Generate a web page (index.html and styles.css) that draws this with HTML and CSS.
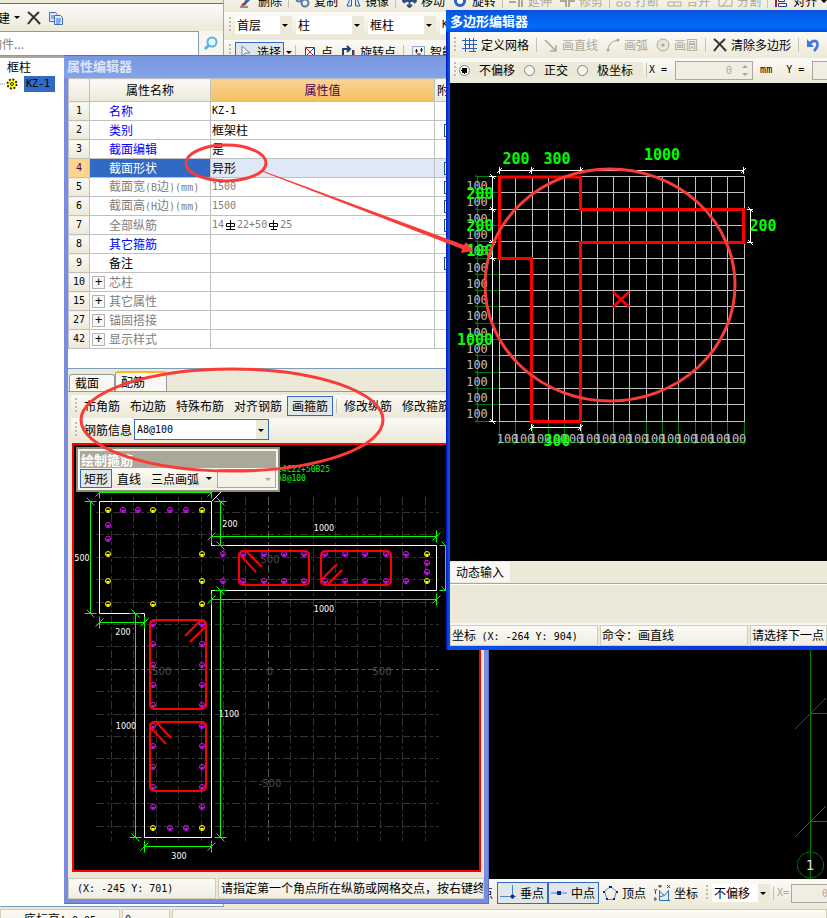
FILE: index.html
```html
<!DOCTYPE html>
<html lang="zh-CN">
<head>
  <meta charset="UTF-8" />
  <meta name="viewport" content="width=device-width, initial-scale=1.0"/>
  <title>属性编辑器</title>
  <link rel="stylesheet" href="styles.css">
</head>
<body>

  <!-- Main window -->
  <div class="app">
    <div class="workspace">

      <!-- Component list -->
      <aside class="dock">
        <div class="dock-title"></div>
        <div class="dock-tools">
          <button class="tool new-btn">新建<i class="arrow"></i></button>
          <button class="tool" aria-label="删除构件"><svg width="14" height="14" viewBox="0 0 14 14"><path d="M1 1Q6 5 13 13M12 1Q6 6 1 13" fill="none" stroke="#333" stroke-width="2"/></svg></button>
          <button class="tool" aria-label="复制构件"><svg width="16" height="14" viewBox="0 0 16 14"><g fill="#dcebff" stroke="#3a6fc4"><path d="M1.500 1.500h6l2 2v7h-8z"/><path d="M6.500 4.500h6l2 2v7h-8z"/></g><path d="M3 5h3M3 7h3M8 8h5M8 10h5M8 12h4" stroke="#3a6fc4"/></svg></button>
        </div>
        <div class="dock-search">
          <input type="text" placeholder="构件..." aria-label="搜索构件">
          <button aria-label="搜索"><svg width="15" height="15" viewBox="0 0 15 15"><circle cx="9" cy="6" r="4.500" fill="#eef8ff" stroke="#5eb0ea" stroke-width="2"/><path d="M6 9l-4 4" stroke="#5eb0ea" stroke-width="3"/></svg></button>
        </div>
        <div class="tree">
          <div class="tree-row">框柱</div>
          <div class="tree-row">
            <svg width="22" height="12" viewBox="0 0 22 12"><path d="M0 6h6" stroke="#888" stroke-dasharray="1 1"/><circle cx="12" cy="6" r="4.500" fill="#ff0" stroke="#222" stroke-width="2" stroke-dasharray="2 1.500"/><circle cx="12" cy="6" r="3.500" fill="#ff0"/><circle cx="12" cy="6" r="1.500" fill="none" stroke="#222"/></svg>
            <span class="picked num">KZ-1</span>
          </div>
        </div>
      </aside>

      <main class="stage">
        <div class="bar bar-cut">
          <button class="tool"><svg width="15" height="14" viewBox="0 0 15 14"><path d="M14 1L6 9" stroke="#2b5fb4" stroke-width="3"/><path d="M2 12q2-5 5-3q1 3-5 3z" fill="#a33"/><path d="M1 13h8" stroke="#334"/></svg>删除</button>
          <i class="sep"></i>
          <button class="tool"><svg width="15" height="14" viewBox="0 0 15 14"><g fill="none" stroke="#5b7ba8" stroke-width="2"><circle cx="4" cy="5" r="2.500"/><circle cx="10" cy="9" r="3.500"/></g></svg>复制</button>
          <button class="tool"><svg width="15" height="14" viewBox="0 0 15 14"><path d="M5.500 1v11h-4.500zM9.500 1v11h4.500z" fill="#d7e6fb" stroke="#2b5fb4"/></svg>镜像</button>
          <i class="sep"></i>
          <button class="tool"><svg width="15" height="14" viewBox="0 0 15 14"><path d="M7.500 1v12M1 7h13M5 11l2.500 2 2.500-2M3 5L1 7l2 2M12 5l2 2-2 2" fill="none" stroke="#2b4f84" stroke-width="2"/></svg>移动</button>
          <button class="tool"><svg width="15" height="14" viewBox="0 0 15 14"><circle cx="7" cy="7" r="4.500" fill="#fff" stroke="#2b62c4" stroke-width="3"/></svg>旋转</button>
          <i class="sep"></i>
          <button class="tool" disabled><svg width="15" height="14" viewBox="0 0 15 14"><path d="M0 8h7M10 2v11M13 2v11" stroke="#aca899" stroke-width="2"/></svg>延伸</button>
          <button class="tool" disabled><svg width="15" height="14" viewBox="0 0 15 14"><path d="M0 7h6M9 7h6M6 1v12M9 4v9" stroke="#aca899" stroke-width="2"/></svg>修剪</button>
          <i class="sep"></i>
          <button class="tool" disabled><svg width="15" height="14" viewBox="0 0 15 14"><path d="M1 8h5v4h-5zM9 8h5v4h-5z" fill="none" stroke="#aca899"/></svg>打断</button>
          <button class="tool" disabled><svg width="15" height="14" viewBox="0 0 15 14"><path d="M1 8h13v4h-13zM7 8v4" fill="none" stroke="#aca899"/></svg>合并</button>
          <button class="tool" disabled><svg width="15" height="14" viewBox="0 0 15 14"><path d="M1 5h13v7h-13zM4 13l7-10" fill="none" stroke="#aca899"/></svg>分割</button>
          <i class="sep"></i>
          <button class="tool"><svg width="15" height="14" viewBox="0 0 15 14"><path d="M2 1v12" stroke="#a22" stroke-width="2"/><path d="M4.500 4.500h6v3h-6zM4.500 9.500h8v3h-8z" fill="#fff" stroke="#1c3c9c"/></svg>对齐<i class="arrow"></i></button>
        </div>
        <div class="bar bar-selects">
          <i class="grip"></i>
          <span class="combo w-floor"><select aria-label="楼层"><option>首层</option></select></span>
          <span class="combo w-kind"><select aria-label="类型"><option>柱</option></select></span>
          <span class="combo w-kind"><select aria-label="构件类型"><option>框柱</option></select></span>
          <span class="combo w-kind"><select aria-label="构件" class="num"><option>KZ-1</option></select></span>
        </div>
        <div class="bar bar-draw">
          <i class="grip"></i>
          <button class="tool pressed"><svg width="15" height="14" viewBox="0 0 15 14"><path d="M4 1v10l3-3h5z" fill="#fff" stroke="#6b86ad"/></svg>选择</button>
          <i class="arrow"></i>
          <i class="sep"></i>
          <button class="tool"><svg width="14" height="14" viewBox="0 0 14 14"><path d="M2.500 2.500h9v9h-9z" fill="#fff" stroke="#1c3c9c"/><path d="M3 3l8 8M11 3l-8 8" stroke="#c22"/></svg>点</button>
          <button class="tool"><svg width="15" height="14" viewBox="0 0 15 14"><path d="M2 10V4h6M6 1l3 3-3 3M12 5v7" fill="none" stroke="#24406c" stroke-width="2"/><path d="M13 5v8" stroke="#c22"/></svg>旋转点</button>
          <i class="sep"></i>
          <button class="tool"><svg width="15" height="14" viewBox="0 0 15 14"><path d="M1.500 1.500h12v11h-12z" fill="none" stroke="#2b5fb4" stroke-dasharray="1 1"/><path d="M4 6h3M9 5h3M6 9h4M5.500 4v4M10.500 3v4" stroke="#222"/></svg>智能布置</button>
        </div>

        <div class="viewport">
          <svg width="34" height="232" viewBox="793 648 34 232">
            <g fill="none" stroke="#008000">
              <path d="M810.500 648v232M795 730l31-31M810 714.500h20M795 838l31-31M810 822.500h20"/>
              <circle cx="810.500" cy="866" r="13" stroke-dasharray="6 1"/>
            </g>
            <text class="axis-no" x="810" y="871">1</text>
          </svg>
        </div>

        <div class="bar bar-snap">
          <button class="tool">交点</button>
          <button class="tool pressed"><svg width="16" height="16" viewBox="0 0 16 16"><path d="M0 11.500h16M12.500 0v14" stroke="#4a86d8"/><circle cx="12.500" cy="11.500" r="2" fill="#0a2a8c"/></svg>垂点</button>
          <button class="tool pressed"><svg width="16" height="16" viewBox="0 0 16 16"><path d="M0 8h16" stroke="#8ab4ea" stroke-width="2"/><path d="M6 6h4v4h-4z" fill="#0a2a8c"/></svg>中点</button>
          <button class="tool"><svg width="15" height="16" viewBox="0 0 15 16"><path d="M7.500 1.500l6 5-2.500 8h-7l-2.500-8z" fill="none" stroke="#4a86d8"/><path d="M6 1h3v2h-3zM0 6h2v2h-2zM13 6h2v2h-2zM3 13h2v2h-2zM10 13h2v2h-2z" fill="#0a2a8c"/></svg>顶点</button>
          <button class="tool"><svg width="16" height="16" viewBox="0 0 16 16"><path d="M5.500 5v10.500h11M5.500 6.500l5 4 4-5v10M5.500 12l5-1.500" fill="none" stroke="#2b6fc4"/><path d="M0 4l1.500 2 1.500-2M1.500 6v3M0 13h2v2h-2zM5 0h2v2h-2zM13 0l3 3M16 0l-3 3" fill="none" stroke="#445"/></svg>坐标</button>
          <i class="grip"></i>
          <span class="combo w-offset"><select aria-label="偏移方式"><option>不偏移</option></select></span>
          <i class="sep"></i>
          <label class="num off" for="snap-x">X=</label>
          <input id="snap-x" class="value num" type="text" value="0" disabled>
        </div>
      </main>
    </div>

    <footer class="status app-status">
      <span class="cell cell-level">底标高：<b class="num">0.05</b></span>
      <span class="cell cell-zero num">0</span>
      <span class="cell cell-rest"></span>
    </footer>
  </div>

  <!-- Property editor -->
  <section class="window props">
    <h1>属性编辑器</h1>
    <div class="window-body">
      <div class="sheet">
        <table>
          <colgroup><col class="c-no"><col class="c-name"><col class="c-value"><col></colgroup>
          <thead>
            <tr><th></th><th>属性名称</th><th class="hot">属性值</th><th class="attach">附加</th></tr>
          </thead>
          <tbody>
            <tr><th>1</th><td class="blue">名称</td><td class="num">KZ-1</td><td></td></tr>
            <tr><th>2</th><td class="blue">类别</td><td>框架柱</td><td><input type="checkbox" aria-label="类别附加"></td></tr>
            <tr><th>3</th><td class="blue">截面编辑</td><td>是</td><td></td></tr>
            <tr class="current"><th>4</th><td>截面形状</td><td>异形</td><td><input type="checkbox" aria-label="截面形状附加"></td></tr>
            <tr class="gray"><th>5</th><td>截面宽<b class="num">(B</b>边<b class="num">)(mm)</b></td><td class="num">1500</td><td><input type="checkbox" aria-label="截面宽附加"></td></tr>
            <tr class="gray"><th>6</th><td>截面高<b class="num">(H</b>边<b class="num">)(mm)</b></td><td class="num">1500</td><td><input type="checkbox" aria-label="截面高附加"></td></tr>
            <tr class="gray"><th>7</th><td>全部纵筋</td><td class="num">14<svg class="bar-sign" width="13" height="10" viewBox="0 0 13 10"><path d="M2.500 3.500h8v3h-8zM6.500 0v9M2 9.500h9" fill="none" stroke="#000"/></svg>22+50<svg class="bar-sign" width="13" height="10" viewBox="0 0 13 10"><path d="M2.500 3.500h8v3h-8zM6.500 0v9M4 9.500h6" fill="none" stroke="#000"/></svg>25</td><td><input type="checkbox" aria-label="全部纵筋附加"></td></tr>
            <tr><th>8</th><td class="blue">其它箍筋</td><td></td><td></td></tr>
            <tr><th>9</th><td>备注</td><td></td><td><input type="checkbox" aria-label="备注附加"></td></tr>
            <tr class="gray group"><th>10</th><td><button>+</button>芯柱</td><td></td><td></td></tr>
            <tr class="gray group"><th>15</th><td><button>+</button>其它属性</td><td></td><td></td></tr>
            <tr class="gray group"><th>27</th><td><button>+</button>锚固搭接</td><td></td><td></td></tr>
            <tr class="gray group"><th>42</th><td><button>+</button>显示样式</td><td></td><td></td></tr>
          </tbody>
        </table>
      </div>

      <div class="tabs">
        <button class="tab">截面</button>
        <button class="tab active">配筋</button>
      </div>

      <div class="bar bar-rebar">
        <i class="grip"></i>
        <button class="tool">布角筋</button>
        <button class="tool">布边筋</button>
        <button class="tool">特殊布筋</button>
        <button class="tool">对齐钢筋</button>
        <button class="tool pressed">画箍筋</button>
        <i class="sep"></i>
        <button class="tool">修改纵筋</button>
        <button class="tool">修改箍筋</button>
      </div>
      <div class="bar bar-info">
        <i class="grip"></i>
        <label for="rebar-info">钢筋信息</label>
        <span class="combo framed w-info"><select id="rebar-info" class="num"><option>A8@100</option></select></span>
      </div>

      <div class="section-view">
        <svg id="section" width="404" height="426" viewBox="74 445 404 426">
          <g id="section-grid" class="grid"></g>
          <g class="scale-text">
            <text x="160" y="675">-500</text>
            <text x="270" y="675">0</text>
            <text x="382" y="675">500</text>
            <text x="270" y="563">500</text>
            <text x="270" y="787">-500</text>
          </g>
          <path class="outline" d="M99.500 501.500h112v44h225v45h-225v247h-67v-224h-45zM212 501l9-9"/>
          <g id="section-dims" class="dims"></g>
          <g class="dim-text">
            <text x="82" y="561">500</text>
            <text x="123" y="635">200</text>
            <text x="126" y="729">1000</text>
            <text x="179" y="859">300</text>
            <text x="230" y="527">200</text>
            <text x="229" y="717">1100</text>
            <text x="324" y="531">1000</text>
            <text x="324" y="612">1000</text>
          </g>
          <g id="rebars"></g>
          <g class="stirrup">
            <rect x="239" y="551" width="70" height="34" rx="4"/>
            <rect x="321" y="551" width="70" height="34" rx="4"/>
            <rect x="150" y="620" width="56" height="89" rx="4"/>
            <rect x="150" y="722" width="56" height="69" rx="4"/>
            <path d="M247 552l15 15M241 556l15 16M322 579l15-15M328 584l14-14M185 636l15-15M190 642l15-15M157 723l14 15M151 728l15 16"/>
          </g>
          <g class="note-text">
            <text x="277" y="472">14C22+50B25</text>
            <text x="277" y="481">A8@100</text>
          </g>
        </svg>
        <div class="toolbox">
          <h2>绘制箍筋</h2>
          <div class="toolbox-row">
            <button class="tool pressed">矩形</button>
            <button class="tool">直线</button>
            <button class="tool">三点画弧<i class="arrow"></i></button>
            <span class="combo framed"><select aria-label="弧参数" disabled><option></option></select></span>
          </div>
        </div>
      </div>

      <footer class="status">
        <span class="cell cell-xy num">(X: -245 Y: 701)</span>
        <span class="cell cell-rest">请指定第一个角点所在纵筋或网格交点，按右键终止</span>
      </footer>
    </div>
  </section>

  <!-- Polygon editor -->
  <section class="window polygon">
    <h1>多边形编辑器</h1>
    <div class="window-body">
      <div class="bar bar-poly">
        <i class="grip"></i>
        <button class="tool"><svg width="15" height="14" viewBox="0 0 15 14"><path d="M3.500 0v14M7.500 0v11M11.500 0v14M0 2.500h15M2 6.500h13M0 10.500h15M14 13.500h-7" fill="none" stroke="#2b5fb4"/></svg>定义网格</button>
        <i class="sep"></i>
        <button class="tool" disabled><svg width="14" height="14" viewBox="0 0 14 14"><path d="M1 2l10 10M12 7v6h-6" fill="none" stroke="#aca899" stroke-width="1.500"/></svg>画直线</button>
        <button class="tool" disabled><svg width="14" height="14" viewBox="0 0 14 14"><path d="M2 12Q2 4 12 2" fill="none" stroke="#aca899"/><circle cx="12" cy="2" r="1.500" fill="#aca899"/><circle cx="2" cy="12" r="1.500" fill="#aca899"/></svg>画弧</button>
        <button class="tool" disabled><svg width="14" height="14" viewBox="0 0 14 14"><circle cx="7" cy="7" r="6" fill="#e6e4da" stroke="#aca899"/><circle cx="7" cy="7" r="1.500" fill="#aca899"/></svg>画圆</button>
        <i class="sep"></i>
        <button class="tool"><svg width="14" height="14" viewBox="0 0 14 14"><path d="M1 1Q6 5 13 13M12 1Q6 6 1 13" fill="none" stroke="#333" stroke-width="2"/></svg>清除多边形</button>
        <i class="sep"></i>
        <button class="tool" aria-label="撤销"><svg width="14" height="14" viewBox="0 0 14 14"><path d="M3 6Q8 1 11 4Q13 8 8 13" fill="none" stroke="#3f78d8" stroke-width="2.500"/><path d="M1 1v8h7z" fill="#3f78d8"/></svg></button>
      </div>
      <div class="bar bar-coord">
        <i class="grip"></i>
        <div class="radios">
          <label><input type="radio" name="mode" checked>不偏移</label>
          <label><input type="radio" name="mode">正交</label>
          <label><input type="radio" name="mode">极坐标</label>
        </div>
        <i class="sep"></i>
        <label class="num" for="poly-x">X =</label>
        <span class="spin"><input id="poly-x" class="value num" type="text" value="0" disabled></span>
        <span class="num unit">mm</span>
        <label class="num" for="poly-y">Y =</label>
        <span class="spin"><input id="poly-y" class="value num" type="text" disabled></span>
      </div>

      <div class="poly-view">
        <svg id="poly" width="377" height="478" viewBox="450 83 377 478">
          <g id="poly-ext" class="ext"></g>
          <g id="poly-grid" class="poly-grid"></g>
          <g id="poly-cells" class="cell-text"></g>
          <path class="poly-dims" d="M499 170.500h245M492.500 176v245M750.500 209v33M531 427.500h49
            M499.500 167v7M531.500 167v7M580.500 167v7M743.500 167v7
            M497 173l5-5M529 173l5-5M578 173l5-5M741 173l5-5
            M489 176.500h7M489 209.500h7M489 242.500h7M489 258.500h7M489 421.500h7
            M490 174l5 5M490 207l5 5M490 240l5 5M490 256l5 5M490 419l5 5
            M747 209.500h6M747 242.500h6M748 207l5 5M748 240l5 5
            M531.500 424v7M580.500 424v7M529 430l5-5M578 430l5-5"/>
          <path class="poly-shape" d="M499.500 177h81v32.500h163v33h-163v179h-49v-163h-32z"/>
          <path class="poly-center" d="M613 292l16 15M629 292l-16 15"/>
          <g class="size-text">
            <text x="516" y="164">200</text>
            <text x="557" y="164">300</text>
            <text x="662" y="160">1000</text>
            <text x="480" y="199">200</text>
            <text x="480" y="231">200</text>
            <text x="480" y="256">100</text>
            <text x="475" y="345">1000</text>
            <text x="763" y="231">200</text>
            <text x="557" y="446">300</text>
          </g>
        </svg>
      </div>

      <div class="input-tabs"><button>动态输入</button></div>
      <div class="input-area"></div>
      <footer class="status">
        <span class="cell cell-coord">坐标&nbsp; <b class="num">(X: -264 Y: 904)</b></span>
        <span class="cell cell-coord">命令：画直线</span>
        <span class="cell cell-rest">请选择下一点</span>
      </footer>
    </div>
  </section>

  <!-- Red pen marks -->
  <svg class="marks" width="827" height="918" viewBox="0 0 827 918">
    <ellipse cx="226" cy="163" rx="40" ry="18"/>
    <ellipse cx="232" cy="420" rx="151" ry="51"/>
    <ellipse cx="610" cy="285" rx="125" ry="116"/>
    <path d="M262 170.500L464 245l2-3 7 9-12 2 1-4L262 171.500z"/>
  </svg>

  <script>
    const NS = 'http://www.w3.org/2000/svg';

    function add(parent, tag, attrs, text) {
      const el = document.createElementNS(NS, tag);
      for (const key in attrs) el.setAttribute(key, attrs[key]);
      if (text) el.textContent = text;
      document.getElementById(parent).appendChild(el);
    }

    // section grid
    for (let i = 0; i < 15; i++) {
      const x = Math.round(111 + i * 22.4) + 0.5;
      const y = Math.round(512 + i * 22.4) + 0.5;
      add('section-grid', 'path', { d: `M${x} 497v344`, class: i === 7 ? 'major' : '' });
      add('section-grid', 'path', { d: `M96 ${y}h343`, class: i === 7 ? 'major' : '' });
    }

    // dimension line with a slash and a short extension at each end
    function dim(x1, y1, x2, y2) {
      let d = `M${x1} ${y1}L${x2} ${y2}`;
      const flat = y1 === y2;
      [[x1, y1], [x2, y2]].forEach(([x, y]) => {
        d += flat ? `M${x} ${y - 6}v12M${x - 4} ${y + 4}l8-8` : `M${x - 6} ${y}h12M${x - 4} ${y - 4}l8 8`;
      });
      add('section-dims', 'path', { d });
    }
    dim(90.5, 501.5, 90.5, 613.5);
    dim(99.5, 492.5, 211.5, 492.5);
    dim(99.5, 622.5, 144.5, 622.5);
    dim(135.5, 613.5, 135.5, 837.5);
    dim(144.5, 846.5, 211.5, 846.5);
    dim(220.5, 501.5, 220.5, 545.5);
    dim(220.5, 590.5, 220.5, 837.5);
    dim(211.5, 536.5, 436.5, 536.5);
    dim(211.5, 599.5, 436.5, 599.5);
    dim(445.5, 545.5, 445.5, 590.5);

    function rebar(x, y, kind) {
      add('rebars', 'circle', { cx: x, cy: y, r: 2.5, class: kind });
      add('rebars', 'path', { d: `M${x - 2} ${y}h4l-2 3z`, class: kind + '-tip' });
    }
    [[108, 510], [153, 510], [202, 510], [108, 554], [202, 554], [108, 581], [202, 581],
     [108, 604], [153, 604], [202, 604], [427, 554], [427, 581], [153, 828], [202, 828]]
      .forEach(([x, y]) => rebar(x, y, 'corner'));
    [[123, 510], [138, 510], [170, 510], [186, 510], [108, 525], [108, 539],
     [427, 563], [427, 572], [170, 828], [186, 828]]
      .forEach(([x, y]) => rebar(x, y, 'side'));
    [223, 243, 264, 284, 304, 325, 345, 365, 386, 406].forEach(x => {
      rebar(x, 554, 'side');
      rebar(x, 581, 'side');
    });
    [624, 644, 665, 685, 705, 726, 746, 767, 787, 807].forEach(y => {
      rebar(153, y, 'side');
      rebar(202, y, 'side');
    });

    // polygon grid, 15 x 15 cells
    for (let i = 0; i <= 15; i++) {
      const x = Math.round(499 + i * 16.3) + 0.5;
      const y = Math.round(176 + i * 16.3) + 0.5;
      add('poly-grid', 'path', { d: `M${x} 176v246M499 ${y}h245` });
      add('poly-ext', 'path', { d: `M${x} 421v23M${x - 2} 445l4-4M475 ${y}h24M475 ${y - 2}l4 4` });
      if (i < 15) {
        add('poly-cells', 'text', { x: x + 8, y: 443 }, '100');
        add('poly-cells', 'text', { x: 477, y: y + 13 }, '100');
      }
    }
    add('poly-ext', 'path', { d: 'M477.5 176v246M499 442.5h245' });
  </script>
</body>
</html>
```
FILE: styles.css
```css
* {
  box-sizing: border-box;
}

body {
  margin: 0;
  height: 100vh;
  overflow: hidden;
  position: relative;
  background: #ece9d8;
  color: #000;
  font-family: "Noto Sans CJK SC", sans-serif;
  font-size: 12px;
  line-height: 16px;
  white-space: nowrap;
}

button,
input,
select {
  margin: 0;
  font: inherit;
  color: inherit;
}

b {
  font-weight: normal;
}

svg {
  display: block;
  flex: none;
}

.num {
  font-family: "DejaVu Sans Mono", "Noto Sans CJK SC", monospace;
  font-size: 10px;
}

/* main window */
.app {
  height: 100vh;
  display: flex;
  flex-direction: column;
}

.workspace {
  flex: 1;
  min-height: 0;
  display: flex;
}

.dock {
  width: 224px;
  display: flex;
  flex-direction: column;
  border-right: 1px solid #aca899;
  border-bottom: 1px solid #7f9db9;
  overflow: hidden;
}

.dock-title {
  height: 4px;
  border-bottom: 1px solid #716f64;
}

.dock-tools {
  height: 27px;
  display: flex;
  align-items: center;
  gap: 5px;
  background: linear-gradient(#fbfaf6, #ece9d8);
}

.dock-tools .tool {
  padding: 0;
}

.dock-tools .new-btn {
  margin-left: -15px;
}

.dock-search {
  height: 25px;
  display: flex;
}

.dock-search input {
  width: 212px;
  padding: 0 0 0 2px;
  margin-left: -13px;
  flex: none;
  border: 1px solid #7f9db9;
  background: #fff;
}

.dock-search input::placeholder {
  color: #808080;
  opacity: 1;
}

.dock-search button {
  flex: 1;
  padding: 0 4px;
  border: 0;
  background: #f6f5ee;
}

.tree {
  flex: 1;
  background: #fff;
  border-top: 2px solid #aca899;
}

.tree-row {
  height: 17px;
  display: flex;
  align-items: center;
}

.tree-row:first-child {
  padding-left: 7px;
}

.picked {
  padding: 0 5px 0 2px;
  margin-left: 2px;
  background: #316ac5;
  color: #000;
}

.stage {
  flex: 1;
  min-width: 0;
  display: flex;
  flex-direction: column;
  overflow: hidden;
}

.bar {
  display: flex;
  align-items: center;
  flex: none;
  background: linear-gradient(#fbfaf6, #ece9d8);
}

.tool {
  display: flex;
  align-items: center;
  gap: 4px;
  flex: none;
  height: 20px;
  padding: 0 3px;
  border: 1px solid transparent;
  background: none;
}

.tool:disabled,
.off {
  color: #aca899;
}

.pressed {
  border-color: #316ac5;
  background: #e1e6e8;
}

.sep {
  flex: none;
  width: 1px;
  height: 14px;
  margin: 0 3px;
  background: #c5c2b2;
}

.grip {
  flex: none;
  width: 2px;
  height: 16px;
  margin: 0 4px;
  background: repeating-linear-gradient(#c1bda9 0 2px, transparent 2px 4px);
}

.arrow {
  flex: none;
  border: 3px solid transparent;
  border-top-color: #000;
  border-bottom-width: 0;
}

.combo {
  flex: none;
  position: relative;
  display: flex;
  height: 18px;
  background: #fff;
}

.combo::after {
  content: "";
  position: absolute;
  right: 4px;
  top: 8px;
  border: 3px solid transparent;
  border-top-color: #000;
  border-bottom-width: 0;
}

.combo select {
  width: 100%;
  padding: 0 0 0 2px;
  border: 0;
  appearance: none;
  background: linear-gradient(90deg, transparent calc(100% - 12px), #ece9d8 0);
}

.combo.framed {
  height: 21px;
  border: 1px solid #316ac5;
}

.combo.framed:has(:disabled) {
  border-color: #aca899;
  background: #f4f2e8;
}

.framed:has(:disabled)::after {
  border-top-color: #aca899;
}

.framed select:disabled {
  background: none;
}

.w-floor { width: 57px; }
.w-kind { width: 68px; }
.w-offset { width: 58px; }
.w-info { width: 135px; }

.bar-cut {
  height: 22px;
  margin-top: -10px;
  padding-left: 11px;
}

.bar-cut .sep {
  margin: 0 2px;
}

.bar-selects {
  height: 25px;
  gap: 4px;
}

.bar-selects .grip {
  margin: 0 0 0 5px;
}

.bar-draw {
  height: 24px;
  margin: 3px 0 1px;
  padding-left: 1px;
}

.bar-draw .pressed {
  padding: 0 2px;
  margin-right: 2px;
}

.viewport {
  flex: 1;
  min-height: 0;
  background: #000;
  display: flex;
  justify-content: flex-end;
  align-items: flex-end;
}

.axis-no {
  fill: #e8d8e8;
  font: 14px "DejaVu Sans Mono", monospace;
  text-anchor: middle;
}

.bar-snap {
  height: 28px;
  padding-left: 241px;
}

.bar-snap .tool {
  height: 22px;
}

.bar-snap .pressed {
  width: 51px;
  padding: 0 2px;
}

.value {
  width: 78px;
  height: 19px;
  margin-left: 4px;
  padding: 0 20px;
  border: 1px solid #aca899;
  background: #f0eee2;
  color: #aca899;
  text-align: right;
}

.bar-snap .value {
  padding-right: 40px;
  margin-left: 2px;
}

.status {
  flex: none;
  display: flex;
  gap: 2px;
  height: 21px;
  overflow: hidden;
}

.cell {
  flex: none;
  padding: 1px 2px;
  border: 1px solid #d0ceb8;
  background: linear-gradient(#fbfaf6, #f0eee2);
}

.cell.num {
  line-height: 17px;
}

.cell-rest {
  flex: 1;
  overflow: hidden;
}

.app-status {
  height: 11px;
  padding-top: 2px;
}

.app-status .cell {
  height: 20px;
}

.cell-level {
  width: 120px;
  padding-left: 23px;
}

.cell-zero { width: 48px; }

/* floating windows */
.window {
  position: absolute;
  display: flex;
  flex-direction: column;
}

.window h1 {
  flex: none;
  margin: 0;
  height: 22px;
  font-size: 13px;
  line-height: 22px;
}

.window-body {
  flex: 1;
  min-height: 0;
  display: flex;
  flex-direction: column;
  overflow: hidden;
  background: #ece9d8;
}

.props {
  left: 64px;
  top: 55px;
  width: 425px;
  height: 849px;
  padding: 0 4px 4px;
  background: #7a8ce0;
  border: 1px solid #5d6fc8;
  border-width: 1px 1px 1px 0;
}

.props h1 {
  margin: 0 -4px;
  padding-left: 3px;
  background: linear-gradient(#7a96df, #82a4ea);
  color: #dce6fa;
  line-height: 20px;
}

.sheet {
  flex: none;
  height: 291px;
  background: #fff;
  border-bottom: 1px solid #7f9db9;
}

table {
  width: 100%;
  table-layout: fixed;
  border-collapse: collapse;
}

.c-no { width: 21px; }
.c-name { width: 121px; }
.c-value { width: 224px; }

th,
td {
  height: 19px;
  padding: 0 0 0 1px;
  border: 1px solid #c0c0c0;
  line-height: 16px;
  text-align: left;
  overflow: hidden;
}

th {
  padding: 0;
  font-weight: normal;
  text-align: center;
  background: linear-gradient(#fbfaf6, #ece9d8);
}

thead th {
  height: 23px;
}

thead .hot {
  background: linear-gradient(#f9d497, #f3c060);
  color: #500050;
}

thead .attach {
  padding-left: 2px;
  text-align: left;
}

tbody th {
  font-family: "DejaVu Sans Mono", monospace;
  font-size: 10px;
}

tbody td:nth-child(2) {
  padding-left: 19px;
}

tbody td:nth-child(4) {
  padding-left: 9px;
}

td input {
  display: block;
  width: 13px;
  height: 13px;
  appearance: none;
  border: 1px solid #1c5180;
  background: #fff;
}

.bar-sign {
  display: inline-block;
  vertical-align: -2px;
}

.blue {
  color: #00f;
}

.gray td {
  color: #808080;
}

.current th {
  background: #ffd48d;
  color: #500050;
}

.current td {
  background: #dfe8f6;
}

.current td:nth-child(2) {
  background: #316ac5;
  color: #fff;
}

tbody .group td:nth-child(2) {
  padding-left: 2px;
}

.group button {
  width: 13px;
  height: 13px;
  margin-right: 4px;
  padding: 0;
  border: 1px solid #b4b4b4;
  background: #f8f8f8;
  color: #000;
  font: 12px/11px "DejaVu Sans Mono", monospace;
  vertical-align: 1px;
}

.tabs {
  flex: none;
  height: 23px;
  display: flex;
  align-items: flex-end;
  padding-left: 1px;
  border-bottom: 1px solid #919b9c;
}

.tab {
  width: 46px;
  height: 17px;
  padding: 0 5px;
  border: 1px solid #919b9c;
  border-bottom: 0;
  border-radius: 3px 3px 0 0;
  background: #f8f7f2;
  text-align: left;
}

.tab.active {
  width: 52px;
  height: 20px;
  border-top: 2px solid #ffb52a;
}

.bar-rebar {
  height: 22px;
  margin: 3px 0 0 3px;
}

.bar-rebar .tool {
  padding: 0 4px;
}

.bar-rebar .grip,
.bar-info .grip {
  margin: 0 2px 0 4px;
}

.bar-rebar .sep {
  margin: 0 2px 0 3px;
}

.bar-info {
  height: 23px;
  margin: 1px 0 2px 3px;
}

.bar-info label {
  margin: 0 2px 0 5px;
}

.bar-info .framed::after {
  top: 9px;
}

.section-view {
  position: relative;
  flex: 1;
  min-height: 0;
  margin: 0 3px 0 4px;
  border: 2px solid #f00;
  background: #000;
  overflow: hidden;
}

.section-view + .status {
  margin-top: 6px;
}

.cell-xy {
  width: 148px;
  padding-left: 8px;
}

.grid path {
  stroke: #333;
  stroke-dasharray: 8 3 3 3;
}

.grid .major {
  stroke: #5a5a5a;
}

.outline {
  fill: none;
  stroke: #fff;
}

.dims {
  fill: none;
  stroke: #0f0;
}

.dim-text {
  fill: #fff;
  font: 8px "DejaVu Sans", sans-serif;
  text-anchor: middle;
}

.scale-text {
  fill: #4a4a4a;
  font: 10px "DejaVu Sans", sans-serif;
  text-anchor: middle;
}

.note-text {
  fill: #0f0;
  font: 8px "DejaVu Sans Mono", monospace;
}

.corner,
.side {
  fill: none;
  stroke: #ff0;
}

.side {
  stroke: #f0f;
}

.corner-tip {
  fill: #ff0;
}

.side-tip {
  fill: #a020ff;
}

.stirrup {
  fill: none;
  stroke: #f00;
  stroke-width: 2;
}

.toolbox {
  position: absolute;
  left: 2px;
  top: 2px;
  width: 204px;
  padding: 2px;
  border: 2px solid #8f8b7b;
  background: #f6f5ee;
}

.toolbox h2 {
  margin: 0;
  padding-left: 1px;
  background: #aca899;
  color: #fff;
  font-size: 13px;
  line-height: 17px;
}

.toolbox-row {
  display: flex;
  align-items: center;
  margin-top: 1px;
  background: linear-gradient(#fbfaf6, #ece9d8);
}

.toolbox .tool {
  height: 19px;
  padding: 0 4px;
}

.toolbox .pressed {
  padding: 0 3px;
}

.toolbox .tool .arrow {
  margin-left: 3px;
}

.toolbox .framed {
  flex: 1;
  height: 19px;
}

.polygon {
  left: 446px;
  top: 10px;
  right: 0;
  height: 640px;
  padding: 0 0 4px 4px;
  background: linear-gradient(90deg, #0018c0, #0a50e8 3px, #0831d9);
}

.polygon h1 {
  margin: 0 0 0 -4px;
  padding-left: 4px;
  background: linear-gradient(#0a50d8, #0364f2 40%, #0468f6 80%, #0050d8);
  color: #fff;
}

.bar-poly {
  height: 26px;
}

.bar-poly .grip {
  margin: 0 2px 0 4px;
}

.bar-coord {
  height: 25px;
  padding-bottom: 1px;
}

.bar-coord .grip {
  margin-right: 3px;
}

.radios {
  display: flex;
  gap: 9px;
  padding-right: 10px;
  background: #ece9d8;
}

.radios label {
  display: flex;
  align-items: center;
  gap: 9px;
}

.radios input {
  width: 11px;
  height: 11px;
  appearance: none;
  border: 1px solid #808080;
  border-radius: 50%;
  background: #f6f5ee;
}

.radios input:checked {
  background: radial-gradient(#000 3px, #fff 3px);
}

.bar-coord .sep {
  margin: 0 2px 0 3px;
}

.spin {
  position: relative;
  display: flex;
  margin: 0 7px 0 4px;
}

.spin::before,
.spin::after {
  content: "";
  position: absolute;
  right: 5px;
  top: 4px;
  border: 3px solid transparent;
  border-top-width: 0;
  border-bottom-color: #aca899;
}

.spin::after {
  top: 12px;
  border-width: 3px 3px 0;
  border-color: #aca899 transparent transparent;
}

.unit {
  margin-right: 14px;
}

.poly-view {
  flex: 1;
  min-height: 0;
  background: #000;
  overflow: hidden;
}

.poly-grid {
  stroke: #c0c0c0;
}

.ext {
  fill: none;
  stroke: #008000;
}

.cell-text {
  fill: #c0c0c0;
  font: 12px "DejaVu Sans Mono", monospace;
  text-anchor: middle;
}

.poly-dims {
  fill: none;
  stroke: #fff;
}

.poly-shape {
  fill: none;
  stroke: #f00;
  stroke-width: 3;
}

.poly-center {
  stroke: #f00;
  stroke-width: 3;
}

.size-text {
  fill: #0f0;
  font: bold 15px "DejaVu Sans Mono", monospace;
  text-anchor: middle;
}

.input-tabs {
  flex: none;
  height: 23px;
  border-bottom: 1px solid #aca899;
}

.input-tabs button {
  height: 20px;
  margin-top: 1px;
  padding: 0 6px;
  border: 0;
  background: #f8f7f2;
}

.input-area {
  flex: none;
  height: 41px;
  border-top: 1px solid #fff;
  border-bottom: 2px solid #f8f7f2;
}

.cell-coord {
  width: 148px;
}

.polygon .cell {
  padding-left: 1px;
}

.marks {
  position: absolute;
  left: 0;
  top: 0;
  pointer-events: none;
}

.marks ellipse {
  fill: none;
  stroke: #fa3c38;
  stroke-width: 3;
}

.marks path {
  fill: #fa3c38;
}
```
